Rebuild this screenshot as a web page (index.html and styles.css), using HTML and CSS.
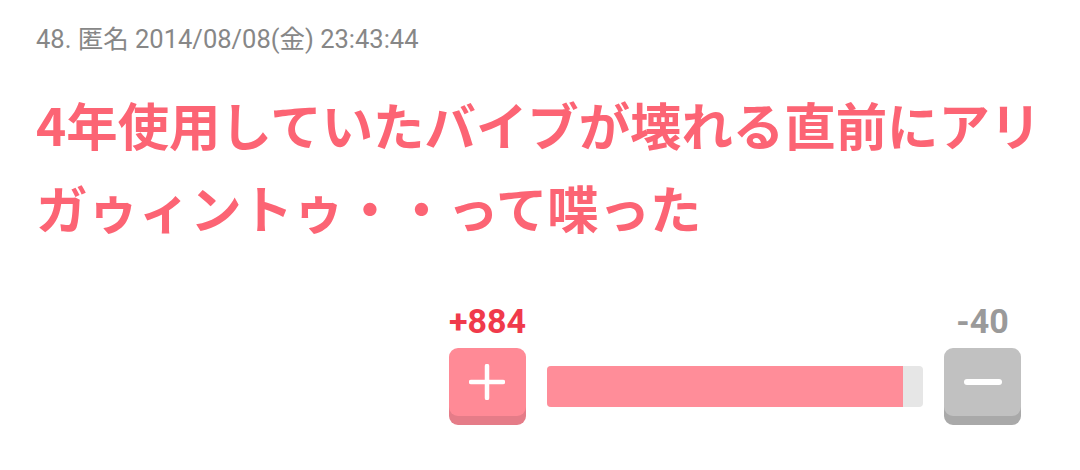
FILE: index.html
```html
<!DOCTYPE html>
<html lang="ja">
<head>
<meta charset="utf-8">
<title>48. 匿名</title>
<link rel="stylesheet" href="styles.css">
</head>
<body>
<article class="res">
  <div class="res-meta">48. 匿名 2014/08/08(金) 23:43:44</div>
  <h1 class="res-body">4年使用していたバイブが壊れる直前にアリガゥィントゥ・・って喋った</h1>
  <div class="vote">
    <div class="vote-col">
      <span class="count count-plus">+884</span>
      <button class="vote-btn vote-btn-plus" aria-label="プラス">
        <svg width="36" height="36" viewBox="0 0 36 36"><path d="M18 2v32M2 18h32" stroke="#fff" stroke-width="4.5" stroke-linecap="round" fill="none"/></svg>
      </button>
    </div>
    <div class="bar"><div class="bar-fill" style="width: 94.7%"></div></div>
    <div class="vote-col">
      <span class="count count-minus">-40</span>
      <button class="vote-btn vote-btn-minus" aria-label="マイナス">
        <svg width="38" height="8" viewBox="0 0 38 8"><path d="M3 4h32" stroke="#fff" stroke-width="6" stroke-linecap="round" fill="none"/></svg>
      </button>
    </div>
  </div>
</article>
</body>
</html>
```
FILE: styles.css
```css
html, body {
  margin: 0;
  background: #fff;
}

body {
  font-family: Roboto, "Noto Sans CJK JP", sans-serif;
}

.res {
  padding: 22px 20px 0 36px;
}

.res-meta {
  font-size: 25.5px;
  line-height: 34px;
  color: #878787;
}

.res-body {
  margin: 26px 0 0;
  font-family: "Noto Sans CJK JP", sans-serif;
  font-weight: 700;
  font-size: 51.4px;
  line-height: 83px;
  color: #fc6474;
  letter-spacing: 0;
}

.vote {
  display: flex;
  align-items: flex-end;
  justify-content: flex-end;
  gap: 21px;
  margin: 56px 39px 0 0;
}

.vote-col {
  display: flex;
  flex-direction: column;
  align-items: center;
  gap: 10px;
}

.count {
  font-family: Roboto, sans-serif;
  font-weight: 700;
  font-size: 34px;
  line-height: 34px;
}

.count-plus { color: #f03a4b; }
.count-minus { color: #9a9a9a; }

.vote-btn {
  display: flex;
  align-items: center;
  justify-content: center;
  width: 77px;
  height: 68px;
  margin: 0 0 9px;
  padding: 0;
  border: 0;
  border-radius: 9px;
}

.vote-btn-plus {
  background: #ff8a96;
  box-shadow: 0 9px 0 #e57c88;
}

.vote-btn-minus {
  background: #c1c1c1;
  box-shadow: 0 9px 0 #a9a9a9;
}

.bar {
  width: 376px;
  height: 41px;
  margin-bottom: 18px;
  border-radius: 4px;
  background: #e6e6e6;
  overflow: hidden;
}

.bar-fill {
  height: 100%;
  background: #ff8d99;
}
```
